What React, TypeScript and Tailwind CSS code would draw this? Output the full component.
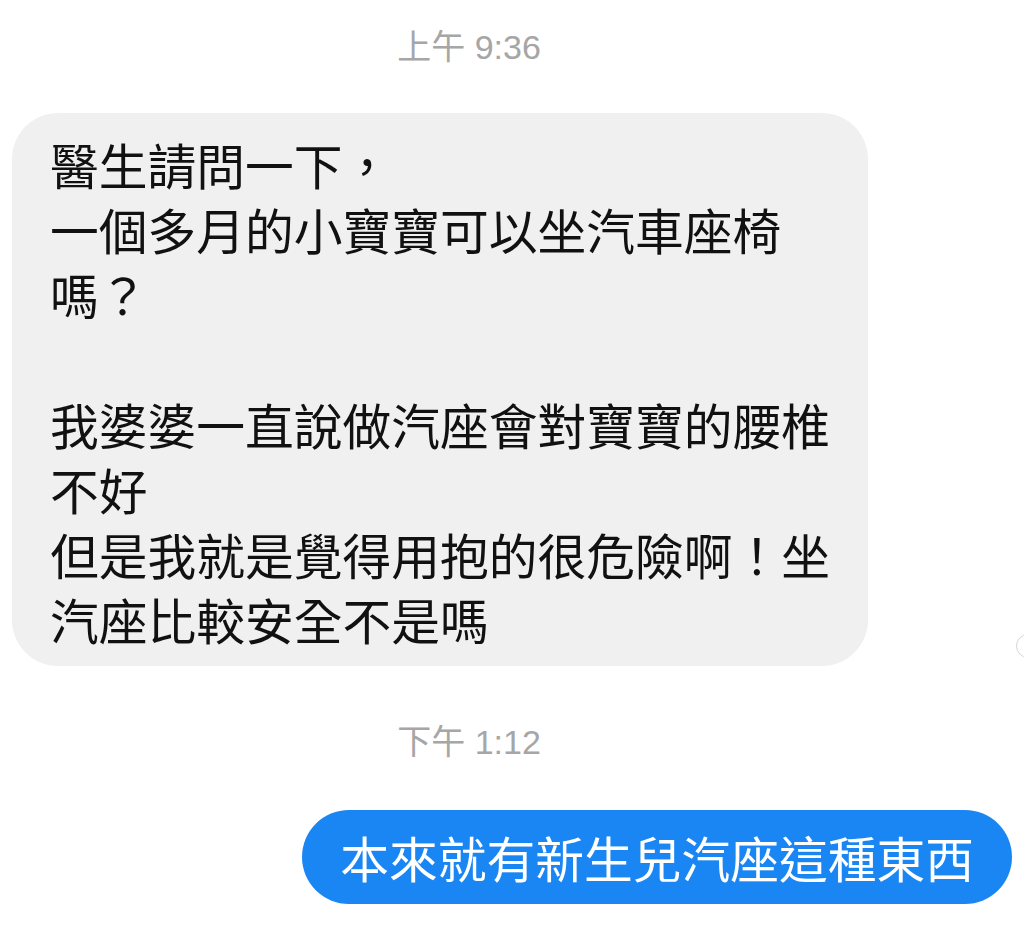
const font = { fontFamily: '"Noto Sans CJK TC", "Noto Sans", sans-serif' };

const incoming = [
  '醫生請問一下，',
  '一個多月的小寶寶可以坐汽車座椅',
  '嗎？',
  '',
  '我婆婆一直說做汽座會對寶寶的腰椎',
  '不好',
  '但是我就是覺得用抱的很危險啊！坐',
  '汽座比較安全不是嗎',
];

function Stamp({ text }: { text: string }) {
  return (
    <div
      className="text-center text-[34px] leading-[36px] text-[#a6a6a6]"
      style={{ fontFamily: '"Liberation Sans", "Noto Sans CJK TC", sans-serif' }}
    >
      {text}
    </div>
  );
}

export default function App() {
  return (
    <div className="w-[1024px] h-[939px] overflow-hidden bg-white pt-[29px]" style={font}>
      <div className="pr-[86px]">
        <Stamp text="上午 9:36" />
      </div>

      <div className="mt-[48px] flex items-end">
        <div className="ml-[12px] w-[856px] rounded-[46px] bg-[#f0f0f0] pl-[38px] pr-[30px] pt-[18px] pb-[15px]">
          {incoming.map((line, i) => (
            <div key={i} className="h-[65px] text-[48.75px] leading-[65px] text-[#111111] whitespace-nowrap">
              {line}
            </div>
          ))}
        </div>
        <div className="ml-auto mr-[-16px] mb-[8px] h-[24px] w-[24px] rounded-full border border-[#d4d4d4]" />
      </div>

      <div className="mt-[58px] pr-[86px]">
        <Stamp text="下午 1:12" />
      </div>

      <div className="mt-[50px] flex justify-end pr-[12px]">
        <div className="flex h-[94px] items-center rounded-full bg-[#1a86f4] px-[38px] text-[48.75px] leading-none text-white whitespace-nowrap">
          本來就有新生兒汽座這種東西
        </div>
      </div>
    </div>
  );
}
